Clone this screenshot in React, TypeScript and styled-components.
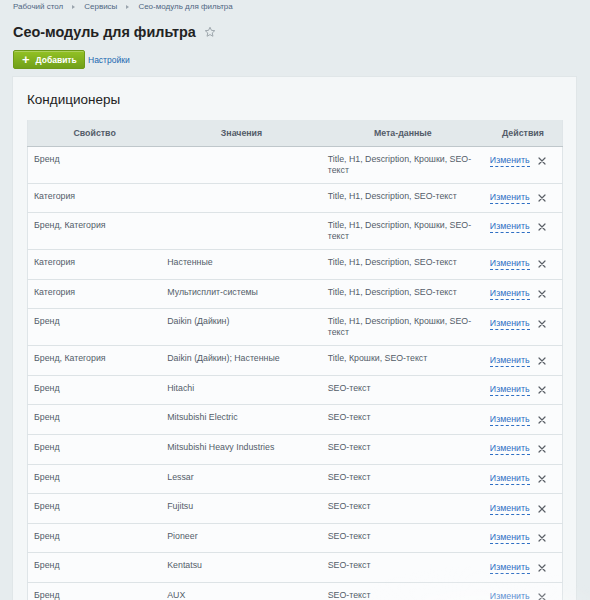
import React from "react";
import styled, { createGlobalStyle } from "styled-components";

const GlobalStyle = createGlobalStyle`
	html, body {
		margin: 0;
		padding: 0;
		background: #e6ecee;
		font-family: "Liberation Sans", Arial, Helvetica, sans-serif;
		color: #535c69;
	}
`;

const Page = styled.div`
	padding: 2px 14px 0 13px;
	min-height: 600px;
	box-sizing: border-box;
	overflow: hidden;
`;

const Breadcrumbs = styled.div`
	display: flex;
	align-items: center;
	gap: 9px;
	height: 10px;
	font-size: 8px;
	line-height: 10px;
	color: #4f6682;
`;

const Crumb = styled.a`
	color: inherit;
	text-decoration: none;
`;

const CrumbArrow = styled.span`
	width: 0;
	height: 0;
	border-top: 2.5px solid transparent;
	border-bottom: 2.5px solid transparent;
	border-left: 3px solid #9aa4ad;
`;

const TitleRow = styled.div`
	display: flex;
	align-items: center;
	gap: 8px;
	margin-top: 10px;
	height: 20px;
`;

const Title = styled.h1`
	margin: 0;
	font-size: 14.4px;
	line-height: 20px;
	font-weight: bold;
	color: #222;
`;

const Toolbar = styled.div`
	display: flex;
	align-items: center;
	gap: 3px;
	margin-top: 8px;
`;

const AddButton = styled.button`
	display: flex;
	align-items: center;
	gap: 6px;
	height: 19px;
	width: 72px;
	padding: 0 0 0 8px;
	box-sizing: border-box;
	border: 1px solid #6e9a18;
	border-radius: 2px;
	background: linear-gradient(#93c224, #71a01a);
	box-shadow: inset 0 1px 0 rgba(255, 255, 255, 0.25);
	color: #fff;
	font-family: inherit;
	font-size: 8.5px;
	font-weight: bold;
	cursor: pointer;
`;

const Plus = styled.span`
	font-size: 13px;
	line-height: 13px;
	font-weight: bold;
	margin-top: -1px;
`;

const Link = styled.a`
	color: #2067b0;
	font-size: 8.5px;
	text-decoration: none;
`;

const Card = styled.div`
	margin-top: 8px;
	background: #f4f7f8;
	padding: 14px 13px 20px 14px;
	box-shadow: 0 0 0 1px #e0e6e8;
`;

const CardTitle = styled.h2`
	margin: 0 0 11px;
	font-size: 13.5px;
	line-height: 18px;
	font-weight: normal;
	color: #222;
`;

const Table = styled.table`
	width: 100%;
	table-layout: fixed;
	border-collapse: collapse;
	background: #fbfcfd;
	border-left: 1px solid #dfe5e8;
	border-right: 1px solid #dfe5e8;
	font-size: 8.8px;
`;

const Th = styled.th`
	height: 26px;
	padding: 0 6px;
	box-sizing: border-box;
	background: #e3e9eb;
	border-bottom: 1px solid #bfc7cb;
	font-weight: bold;
	color: #535c69;
	text-align: center;
`;

const Td = styled.td`
	padding: 7px 6px 7px;
	vertical-align: top;
	line-height: 11px;
	color: #535c69;
	border-bottom: 1px solid #dde3e6;
`;

const Actions = styled.div`
	display: flex;
	align-items: center;
	gap: 8px;
	height: 14.6px;
`;

const EditLink = styled.a`
	color: #2f6fc4;
	border-bottom: 1px dashed #2f6fc4;
	line-height: 11px;
	text-decoration: none;
	cursor: pointer;
`;

const Remove = styled.span`
	display: flex;
	align-items: center;
`;

const Glow = styled.div`
	position: fixed;
	right: -30px;
	bottom: -75px;
	width: 280px;
	height: 110px;
	background: radial-gradient(ellipse at center, rgba(255, 255, 255, 0.45), rgba(255, 255, 255, 0) 70%);
	pointer-events: none;
`;

function Star() {
	return (
		<svg width="12" height="12" viewBox="0 0 24 24" fill="none" stroke="#9ea7ad" strokeWidth="2" strokeLinejoin="round">
			<path d="M12 2.5l2.9 6.2 6.6.7-5 4.5 1.4 6.6L12 17.2l-5.9 3.3 1.4-6.6-5-4.5 6.6-.7z" />
		</svg>
	);
}

function Cross() {
	return (
		<svg width="8" height="8" viewBox="0 0 8 8" stroke="#5a5f66" strokeWidth="1.2" strokeLinecap="round">
			<path d="M1 1l6 6M7 1l-6 6" />
		</svg>
	);
}

interface Row {
	prop: string;
	value: string;
	meta: string;
}

const rows: Row[] = [
	{ prop: "Бренд", value: "", meta: "Title, H1, Description, Крошки, SEO-текст" },
	{ prop: "Категория", value: "", meta: "Title, H1, Description, SEO-текст" },
	{ prop: "Бренд, Категория", value: "", meta: "Title, H1, Description, Крошки, SEO-текст" },
	{ prop: "Категория", value: "Настенные", meta: "Title, H1, Description, SEO-текст" },
	{ prop: "Категория", value: "Мультисплит-системы", meta: "Title, H1, Description, SEO-текст" },
	{ prop: "Бренд", value: "Daikin (Дайкин)", meta: "Title, H1, Description, Крошки, SEO-текст" },
	{ prop: "Бренд, Категория", value: "Daikin (Дайкин); Настенные", meta: "Title, Крошки, SEO-текст" },
	{ prop: "Бренд", value: "Hitachi", meta: "SEO-текст" },
	{ prop: "Бренд", value: "Mitsubishi Electric", meta: "SEO-текст" },
	{ prop: "Бренд", value: "Mitsubishi Heavy Industries", meta: "SEO-текст" },
	{ prop: "Бренд", value: "Lessar", meta: "SEO-текст" },
	{ prop: "Бренд", value: "Fujitsu", meta: "SEO-текст" },
	{ prop: "Бренд", value: "Pioneer", meta: "SEO-текст" },
	{ prop: "Бренд", value: "Kentatsu", meta: "SEO-текст" },
	{ prop: "Бренд", value: "AUX", meta: "SEO-текст" },
];

export default function App() {
	return (
		<>
			<GlobalStyle />
			<Page>
				<Breadcrumbs>
					<Crumb href="#">Рабочий стол</Crumb>
					<CrumbArrow />
					<Crumb href="#">Сервисы</Crumb>
					<CrumbArrow />
					<Crumb href="#">Сео-модуль для фильтра</Crumb>
				</Breadcrumbs>
				<TitleRow>
					<Title>Сео-модуль для фильтра</Title>
					<Star />
				</TitleRow>
				<Toolbar>
					<AddButton>
						<Plus>+</Plus>
						Добавить
					</AddButton>
					<Link href="#">Настройки</Link>
				</Toolbar>
				<Card>
					<CardTitle>Кондиционеры</CardTitle>
					<Table>
						<colgroup>
							<col style={{ width: "25%" }} />
							<col style={{ width: "30%" }} />
							<col style={{ width: "30.3%" }} />
							<col />
						</colgroup>
						<thead>
							<tr>
								<Th>Свойство</Th>
								<Th>Значения</Th>
								<Th>Мета-данные</Th>
								<Th>Действия</Th>
							</tr>
						</thead>
						<tbody>
							{rows.map((r, i) => (
								<tr key={i}>
									<Td>{r.prop}</Td>
									<Td>{r.value}</Td>
									<Td>{r.meta}</Td>
									<Td>
										<Actions>
											<EditLink>Изменить</EditLink>
											<Remove>
												<Cross />
											</Remove>
										</Actions>
									</Td>
								</tr>
							))}
						</tbody>
					</Table>
				</Card>
			</Page>
			<Glow />
		</>
	);
}
